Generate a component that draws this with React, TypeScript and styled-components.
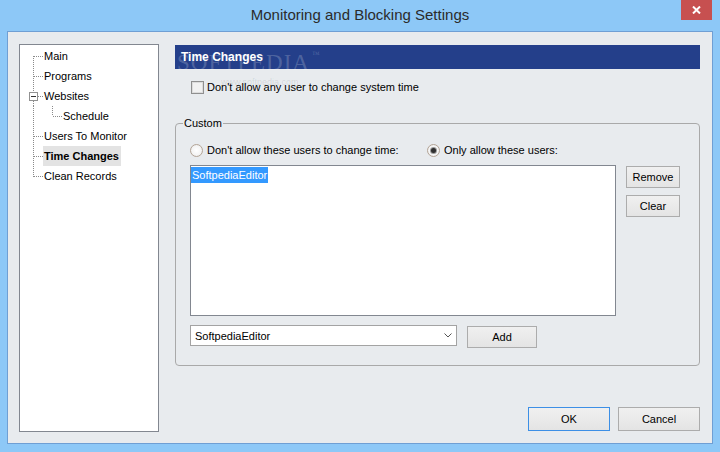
import styled, { createGlobalStyle } from 'styled-components';

const GlobalStyle = createGlobalStyle`
  *, *::before, *::after { box-sizing: border-box; }
  html, body { margin: 0; padding: 0; }
  body {
    font-family: 'Liberation Sans', Arial, sans-serif;
    font-size: 11px;
    color: #000;
  }
`;

const Window = styled.div`
  width: 720px;
  height: 452px;
  background: #8dc8f7;
  display: flex;
  flex-direction: column;
  overflow: hidden;
`;

const TitleBar = styled.div`
  height: 31px;
  flex: none;
  display: grid;
  grid-template-columns: 1fr auto 1fr;
  padding: 0 8px;
`;

const Title = styled.div`
  grid-column: 2;
  font-size: 15px;
  line-height: 30px;
  color: #2b2b2b;
`;

const CloseButton = styled.div`
  grid-column: 3;
  justify-self: end;
  align-self: start;
  width: 31px;
  height: 20px;
  background: #c75050;
  display: flex;
  align-items: center;
  justify-content: center;
`;

const Client = styled.div`
  flex: 1;
  margin: 0 7px 8px;
  border: 1px solid #6f9fd4;
  background: #e8ebee;
  display: flex;
  gap: 16px;
  padding: 12px 12px 11px 11px;
`;

const Tree = styled.div`
  width: 140px;
  flex: none;
  background: #fff;
  border: 1px solid #828790;
  padding-top: 1px;
`;

const TreeRow = styled.div`
  height: 20px;
  display: flex;
  align-items: center;
`;

const TreeLabel = styled.span<{ $selected?: boolean }>`
  height: 20px;
  line-height: 20px;
  padding: 0 2px 0 1px;
  font-weight: ${(p) => (p.$selected ? 'bold' : 'normal')};
  background: ${(p) => (p.$selected ? '#e3e3e3' : 'transparent')};
`;

const Main = styled.div`
  flex: 1;
  display: flex;
  flex-direction: column;
  position: relative;
`;

const Header = styled.div`
  margin-top: 1px;
  height: 24px;
  line-height: 24px;
  padding-left: 6px;
  background: #243f8a;
  color: #fff;
  font-weight: bold;
  font-size: 12px;
`;

const Watermark = styled.div`
  position: absolute;
  top: 6px;
  left: 2px;
  font-family: 'Liberation Serif', 'Times New Roman', serif;
  font-size: 23px;
  letter-spacing: 1px;
  color: rgba(255, 255, 255, 0.2);
  pointer-events: none;
  sup {
    font-size: 8px;
    vertical-align: top;
    margin-left: 2px;
  }
`;

const WatermarkUrl = styled.div`
  position: absolute;
  top: 33px;
  left: 46px;
  font-size: 9px;
  color: rgba(0, 0, 0, 0.1);
  pointer-events: none;
`;

const CheckRow = styled.label`
  margin: 10px 0 0 16px;
  height: 16px;
  display: flex;
  align-items: center;
  gap: 3px;
`;

const CheckBox = styled.span`
  width: 13px;
  height: 13px;
  border: 1px solid #8f8f8f;
  background: #f1f1f1;
  box-shadow: inset 0 0 0 1px #dcdcdc;
`;

const GroupBox = styled.div`
  margin-top: 28px;
  position: relative;
  border: 1px solid #a9a9a9;
  border-radius: 4px;
  padding: 18px 18px 17px 14px;
`;

const GroupLabel = styled.span`
  position: absolute;
  top: -7px;
  left: 7px;
  padding: 0 1px;
  line-height: 13px;
  background: #e8ebee;
`;

const RadioRow = styled.div`
  height: 16px;
  display: flex;
  align-items: center;
`;

const RadioOption = styled.label<{ $width?: number }>`
  display: flex;
  align-items: center;
  gap: 4px;
  width: ${(p) => (p.$width ? `${p.$width}px` : 'auto')};
`;

const RadioCircle = styled.span<{ $checked?: boolean }>`
  width: 13px;
  height: 13px;
  border-radius: 50%;
  border: 1px solid #b3a496;
  background: radial-gradient(circle, #ffffff 0%, #f4f4f4 60%, #e2e2e2 100%);
  display: flex;
  align-items: center;
  justify-content: center;
  &::after {
    content: '';
    width: 5px;
    height: 5px;
    border-radius: 50%;
    background: #2f2f2f;
    box-shadow: 0 0 0 1px #9a9a9a;
    display: ${(p) => (p.$checked ? 'block' : 'none')};
  }
`;

const ListArea = styled.div`
  margin-top: 7px;
  display: flex;
  gap: 10px;
  align-items: flex-start;
`;

const ListBox = styled.div`
  width: 426px;
  height: 151px;
  background: #fff;
  border: 1px solid #828790;
  padding: 1px 0 0 0;
`;

const ListItem = styled.div<{ $selected?: boolean }>`
  display: inline-block;
  height: 16px;
  line-height: 16px;
  padding: 0 1px;
  background: ${(p) => (p.$selected ? '#3399ff' : 'transparent')};
  color: ${(p) => (p.$selected ? '#fff' : '#000')};
`;

const ButtonStack = styled.div`
  margin-top: 1px;
  display: flex;
  flex-direction: column;
  gap: 7px;
`;

const Button = styled.button<{ $w: number; $h: number; $primary?: boolean }>`
  width: ${(p) => p.$w}px;
  height: ${(p) => p.$h}px;
  padding: 0;
  font-family: 'Liberation Sans', Arial, sans-serif;
  font-size: 11px;
  color: #000;
  background: linear-gradient(#f0f0f0, #e4e4e4);
  border: 1px solid ${(p) => (p.$primary ? '#3c8fe6' : '#acacac')};
`;

const ComboRow = styled.div`
  margin-top: 9px;
  display: flex;
  gap: 10px;
  align-items: flex-start;
`;

const Combo = styled.div`
  width: 267px;
  height: 21px;
  background: #fff;
  border: 1px solid #a3a3a3;
  display: flex;
  align-items: center;
  justify-content: space-between;
  padding: 0 4px 0 4px;
`;

const AddButton = styled(Button)`
  margin-top: 1px;
`;

const Footer = styled.div`
  margin-top: auto;
  margin-bottom: 1px;
  display: flex;
  justify-content: flex-end;
  gap: 8px;
`;

type Node = {
  label: string;
  level: number;
  kind: 'first' | 'mid' | 'last' | 'parent' | 'child';
  selected?: boolean;
};

const nodes: Node[] = [
  { label: 'Main', level: 0, kind: 'first' },
  { label: 'Programs', level: 0, kind: 'mid' },
  { label: 'Websites', level: 0, kind: 'parent' },
  { label: 'Schedule', level: 1, kind: 'child' },
  { label: 'Users To Monitor', level: 0, kind: 'mid' },
  { label: 'Time Changes', level: 0, kind: 'mid', selected: true },
  { label: 'Clean Records', level: 0, kind: 'last' },
];

const dot = { stroke: '#8a8a8a', strokeWidth: 1, strokeDasharray: '1 1', shapeRendering: 'crispEdges' as const };

function Branch({ kind }: { kind: Node['kind'] }) {
  if (kind === 'child') {
    return (
      <svg width="42" height="20">
        <line x1="13.5" y1="0" x2="13.5" y2="20" {...dot} />
        <line x1="32.5" y1="0" x2="32.5" y2="10" {...dot} />
        <line x1="33" y1="10.5" x2="42" y2="10.5" {...dot} />
      </svg>
    );
  }
  if (kind === 'parent') {
    return (
      <svg width="23" height="20">
        <line x1="13.5" y1="0" x2="13.5" y2="6" {...dot} />
        <line x1="13.5" y1="15" x2="13.5" y2="20" {...dot} />
        <rect x="9.5" y="6.5" width="8" height="8" fill="#fff" stroke="#919191" shapeRendering="crispEdges" />
        <line x1="11" y1="10.5" x2="16" y2="10.5" stroke="#333" shapeRendering="crispEdges" />
        <line x1="18" y1="10.5" x2="23" y2="10.5" {...dot} />
      </svg>
    );
  }
  const y1 = kind === 'first' ? 10 : 0;
  const y2 = kind === 'last' ? 11 : 20;
  return (
    <svg width="23" height="20">
      <line x1="13.5" y1={y1} x2="13.5" y2={y2} {...dot} />
      <line x1="14" y1="10.5" x2="23" y2="10.5" {...dot} />
    </svg>
  );
}

const App = function App(): JSX.Element {
  return (
    <>
      <GlobalStyle />
      <Window>
        <TitleBar>
          <Title>Monitoring and Blocking Settings</Title>
          <CloseButton>
            <svg width="9" height="8" viewBox="0 0 9 8">
              <path d="M1 0.5 L8 7.5 M8 0.5 L1 7.5" stroke="#fff" strokeWidth="2" />
            </svg>
          </CloseButton>
        </TitleBar>
        <Client>
          <Tree>
            {nodes.map((n) => (
              <TreeRow key={n.label}>
                <Branch kind={n.kind} />
                <TreeLabel $selected={n.selected}>{n.label}</TreeLabel>
              </TreeRow>
            ))}
          </Tree>
          <Main>
            <Header>Time Changes</Header>
            <Watermark>
              SOFTPEDIA<sup>™</sup>
            </Watermark>
            <WatermarkUrl>www.softpedia.com</WatermarkUrl>
            <CheckRow>
              <CheckBox />
              Don't allow any user to change system time
            </CheckRow>
            <GroupBox>
              <GroupLabel>Custom</GroupLabel>
              <RadioRow>
                <RadioOption $width={237}>
                  <RadioCircle />
                  Don't allow these users to change time:
                </RadioOption>
                <RadioOption>
                  <RadioCircle $checked />
                  Only allow these users:
                </RadioOption>
              </RadioRow>
              <ListArea>
                <ListBox>
                  <ListItem $selected>SoftpediaEditor</ListItem>
                </ListBox>
                <ButtonStack>
                  <Button $w={54} $h={22}>Remove</Button>
                  <Button $w={54} $h={22}>Clear</Button>
                </ButtonStack>
              </ListArea>
              <ComboRow>
                <Combo>
                  <span>SoftpediaEditor</span>
                  <svg width="8" height="5" viewBox="0 0 8 5">
                    <polyline points="0.5,0.5 4,4 7.5,0.5" fill="none" stroke="#555" />
                  </svg>
                </Combo>
                <AddButton $w={70} $h={22}>Add</AddButton>
              </ComboRow>
            </GroupBox>
            <Footer>
              <Button $w={82} $h={24} $primary>OK</Button>
              <Button $w={82} $h={24}>Cancel</Button>
            </Footer>
          </Main>
        </Client>
      </Window>
    </>
  );
};

export default App;
